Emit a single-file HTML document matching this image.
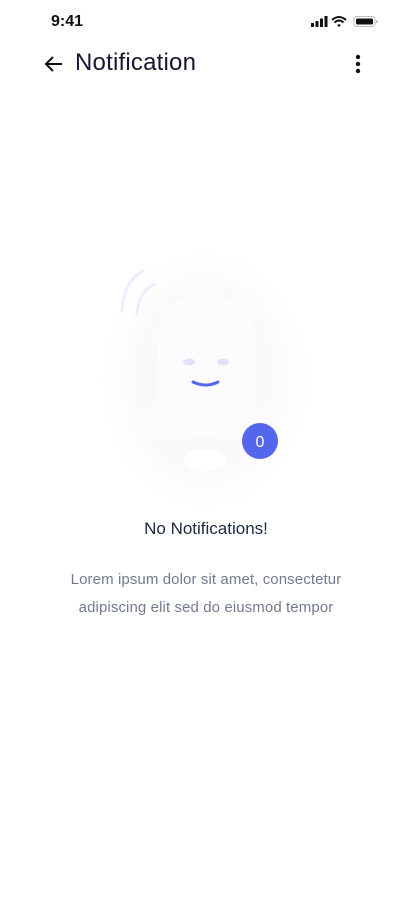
<!DOCTYPE html>
<html><head><style>
body{margin:0;width:412px;height:917px;background:#fff;font-family:"Liberation Sans",sans-serif;position:relative;overflow:hidden}
.t{position:absolute}
</style></head><body>
<div class="t" style="left:51px;top:13px;font-size:16px;font-weight:bold;color:#111">9:41</div>
<svg class="t" style="left:310px;top:15px" width="70" height="14">
<rect x="1" y="8" width="3" height="4" fill="#111"/><rect x="5.5" y="6" width="3" height="6" fill="#111"/><rect x="10" y="3.5" width="3" height="8.5" fill="#111"/><rect x="14.5" y="1" width="3" height="11" fill="#111"/>
<path d="M22 5 Q29 -1 36 5 M24.5 7.5 Q29 3.5 33.5 7.5" stroke="#111" stroke-width="2" fill="none"/><path d="M27 10 L29 12 L31 10 Q29 8.5 27 10Z" fill="#111"/>
<rect x="44" y="1.5" width="21" height="10" rx="3" fill="none" stroke="#bbb"/><rect x="46" y="3.5" width="17" height="6" rx="1.5" fill="#111"/><rect x="66" y="5" width="1.5" height="3" fill="#bbb"/>
</svg>
<svg class="t" style="left:43px;top:54px" width="22" height="20"><path d="M19 10H3M10 3L3 10L10 17" stroke="#111" stroke-width="2" fill="none"/></svg>
<div class="t" style="left:75px;top:49px;font-size:24px;letter-spacing:0.2px;color:#161630">Notification</div>
<svg class="t" style="left:353px;top:54px" width="10" height="20"><circle cx="5" cy="3" r="2.2" fill="#111"/><circle cx="5" cy="10" r="2.2" fill="#111"/><circle cx="5" cy="17" r="2.2" fill="#111"/></svg>
<svg class="t" style="left:0;top:250px" width="412" height="260">
<defs><filter id="f" x="-50%" y="-50%" width="200%" height="200%"><feGaussianBlur stdDeviation="16"/></filter></defs>
<ellipse cx="205" cy="130" rx="80" ry="105" fill="#f2f3f7" opacity="0.5" filter="url(#f)"/>
<path d="M122 310 Q124 281 143 271 M137 313 Q139 290 155 284" stroke="#eceeff" stroke-width="3" fill="none" stroke-linecap="round" transform="translate(0,-250)"/>
<path d="M186 50 Q190 32 205 30 Q220 32 224 50 Z" fill="#fbfbfd"/>
<path d="M157 160 L157 90 Q157 48 205 45 Q255 48 255 90 L255 160 Z" fill="#fcfcfe"/>
<rect x="138" y="155" width="136" height="33" rx="10" fill="#fbfbfd"/>
<ellipse cx="205" cy="210" rx="21" ry="11" fill="#fff"/>
<ellipse cx="189" cy="112" rx="6" ry="3.5" fill="#dfe2fa"/><ellipse cx="223" cy="112" rx="6" ry="3.5" fill="#dfe2fa"/>
<path d="M193 132 Q206 138 218 132" stroke="#5566ee" stroke-width="3" fill="none" stroke-linecap="round"/>
<circle cx="260" cy="191" r="18" fill="#5566ee"/>
<text x="260" y="197" font-size="16" fill="#fff" text-anchor="middle" font-family="Liberation Sans">0</text>
</svg>
<div class="t" style="left:0;width:412px;top:519px;text-align:center;font-size:17px;color:#1d2a40">No Notifications!</div>
<div class="t" style="left:0;width:412px;top:566px;text-align:center;font-size:15px;letter-spacing:0.1px;line-height:28px;color:#727b8e">Lorem ipsum dolor sit amet, consectetur<br>adipiscing elit sed do eiusmod tempor</div>
</body></html>
